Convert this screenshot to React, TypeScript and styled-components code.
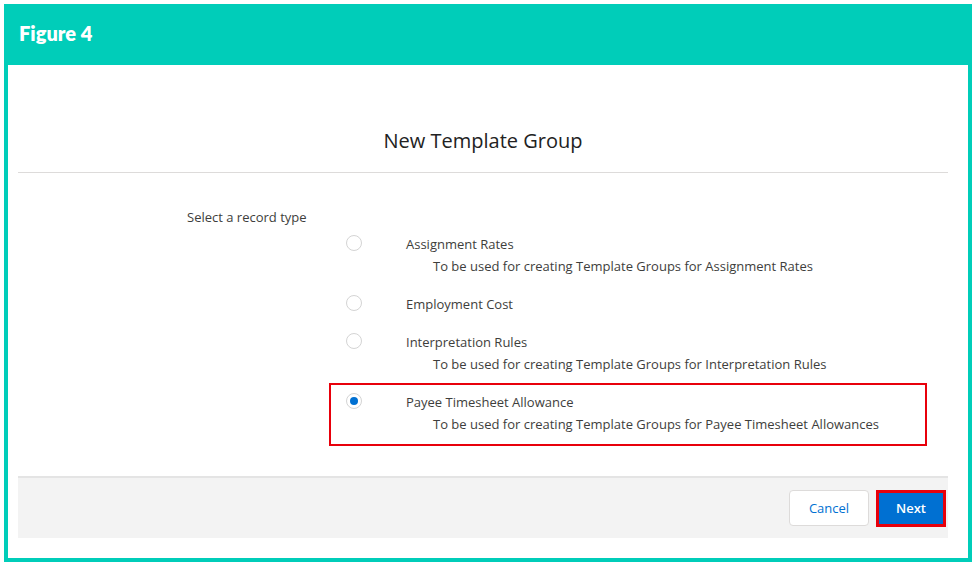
import React from "react";
import styled, { createGlobalStyle } from "styled-components";

const Global = createGlobalStyle`
  body { margin: 0; background: #fff; font-family: "Open Sans", "Liberation Sans", sans-serif; }
`;

const Frame = styled.div`
  margin: 4px;
  width: 960px;
  height: 554px;
  background: #00cdb9;
  padding: 0 4px 4px;
  display: flex;
  flex-direction: column;
`;
const FigureBar = styled.div`
  height: 61px;
  display: flex;
  align-items: center;
  padding-left: 11px;
  color: #fff;
  font-family: Lato, "Open Sans", sans-serif;
  font-weight: 800;
  font-size: 20px;
  padding-bottom: 4px;
  box-sizing: border-box;
`;
const Panel = styled.div`
  flex: 1;
  background: #fff;
  padding: 0 20px 20px 10px;
  display: flex;
  flex-direction: column;
`;
const TitleBar = styled.div`
  height: 108px;
  box-sizing: border-box;
  border-bottom: 1px solid #dddbda;
  display: flex;
  align-items: flex-end;
  justify-content: center;
  padding-bottom: 18px;
  font-size: 20px;
  line-height: 26px;
  color: #222;
`;
const Body = styled.div`
  flex: 1;
  padding-top: 34px;
  display: flex;
  flex-direction: column;
  font-size: 13px;
  color: #3e3e3c;
`;
const Prompt = styled.div`
  padding-left: 169px;
  line-height: 20px;
`;
const List = styled.div`
  margin: -2px 0 0 311px;
  width: 598px;
  display: flex;
  flex-direction: column;
`;
const Option = styled.div<{ $sel?: boolean }>`
  border: 2px solid ${(p) => (p.$sel ? "#e8000b" : "transparent")};
  padding: 6px 0 ${(p) => (p.$sel ? 9 : 6)}px 15px;
  display: flex;
  align-items: flex-start;
`;
const Radio = styled.span<{ $sel?: boolean }>`
  width: 16px;
  height: 16px;
  margin-top: 2px;
  border: 1px solid #d4d4d4;
  border-radius: 50%;
  box-sizing: border-box;
  flex: none;
  display: flex;
  align-items: center;
  justify-content: center;
  &::after {
    content: "";
    width: 8px;
    height: 8px;
    border-radius: 50%;
    background: ${(p) => (p.$sel ? "#0070d2" : "transparent")};
  }
`;
const Texts = styled.div`
  margin-left: 44px;
  line-height: 22px;
`;
const Desc = styled.div`
  padding-left: 27px;
`;
const Footer = styled.div`
  height: 62px;
  box-sizing: border-box;
  background: #f3f3f3;
  border-top: 2px solid #e4e4e4;
  display: flex;
  align-items: center;
  justify-content: flex-end;
  gap: 7px;
  padding-right: 2px;
`;
const Cancel = styled.button`
  width: 80px;
  height: 36px;
  background: #fff;
  border: 1px solid #dddbda;
  border-radius: 4px;
  color: #0070d2;
  font: 13px "Open Sans", sans-serif;
`;
const Next = styled.button`
  width: 70px;
  height: 37px;
  background: #0070d2;
  border: 3px solid #e8000b;
  color: #fff;
  font: 600 13px "Open Sans", sans-serif;
`;

const opts = [
  { t: "Assignment Rates", d: "To be used for creating Template Groups for Assignment Rates" },
  { t: "Employment Cost" },
  { t: "Interpretation Rules", d: "To be used for creating Template Groups for Interpretation Rules" },
  { t: "Payee Timesheet Allowance", d: "To be used for creating Template Groups for Payee Timesheet Allowances", sel: true },
];

export default function App() {
  return (
    <>
      <Global />
      <Frame>
        <FigureBar>Figure 4</FigureBar>
        <Panel>
          <TitleBar>New Template Group</TitleBar>
          <Body>
            <Prompt>Select a record type</Prompt>
            <List>
              {opts.map((o) => (
                <Option key={o.t} $sel={o.sel}>
                  <Radio $sel={o.sel} />
                  <Texts>
                    <div>{o.t}</div>
                    {o.d && <Desc>{o.d}</Desc>}
                  </Texts>
                </Option>
              ))}
            </List>
          </Body>
          <Footer>
            <Cancel>Cancel</Cancel>
            <Next>Next</Next>
          </Footer>
        </Panel>
      </Frame>
    </>
  );
}
